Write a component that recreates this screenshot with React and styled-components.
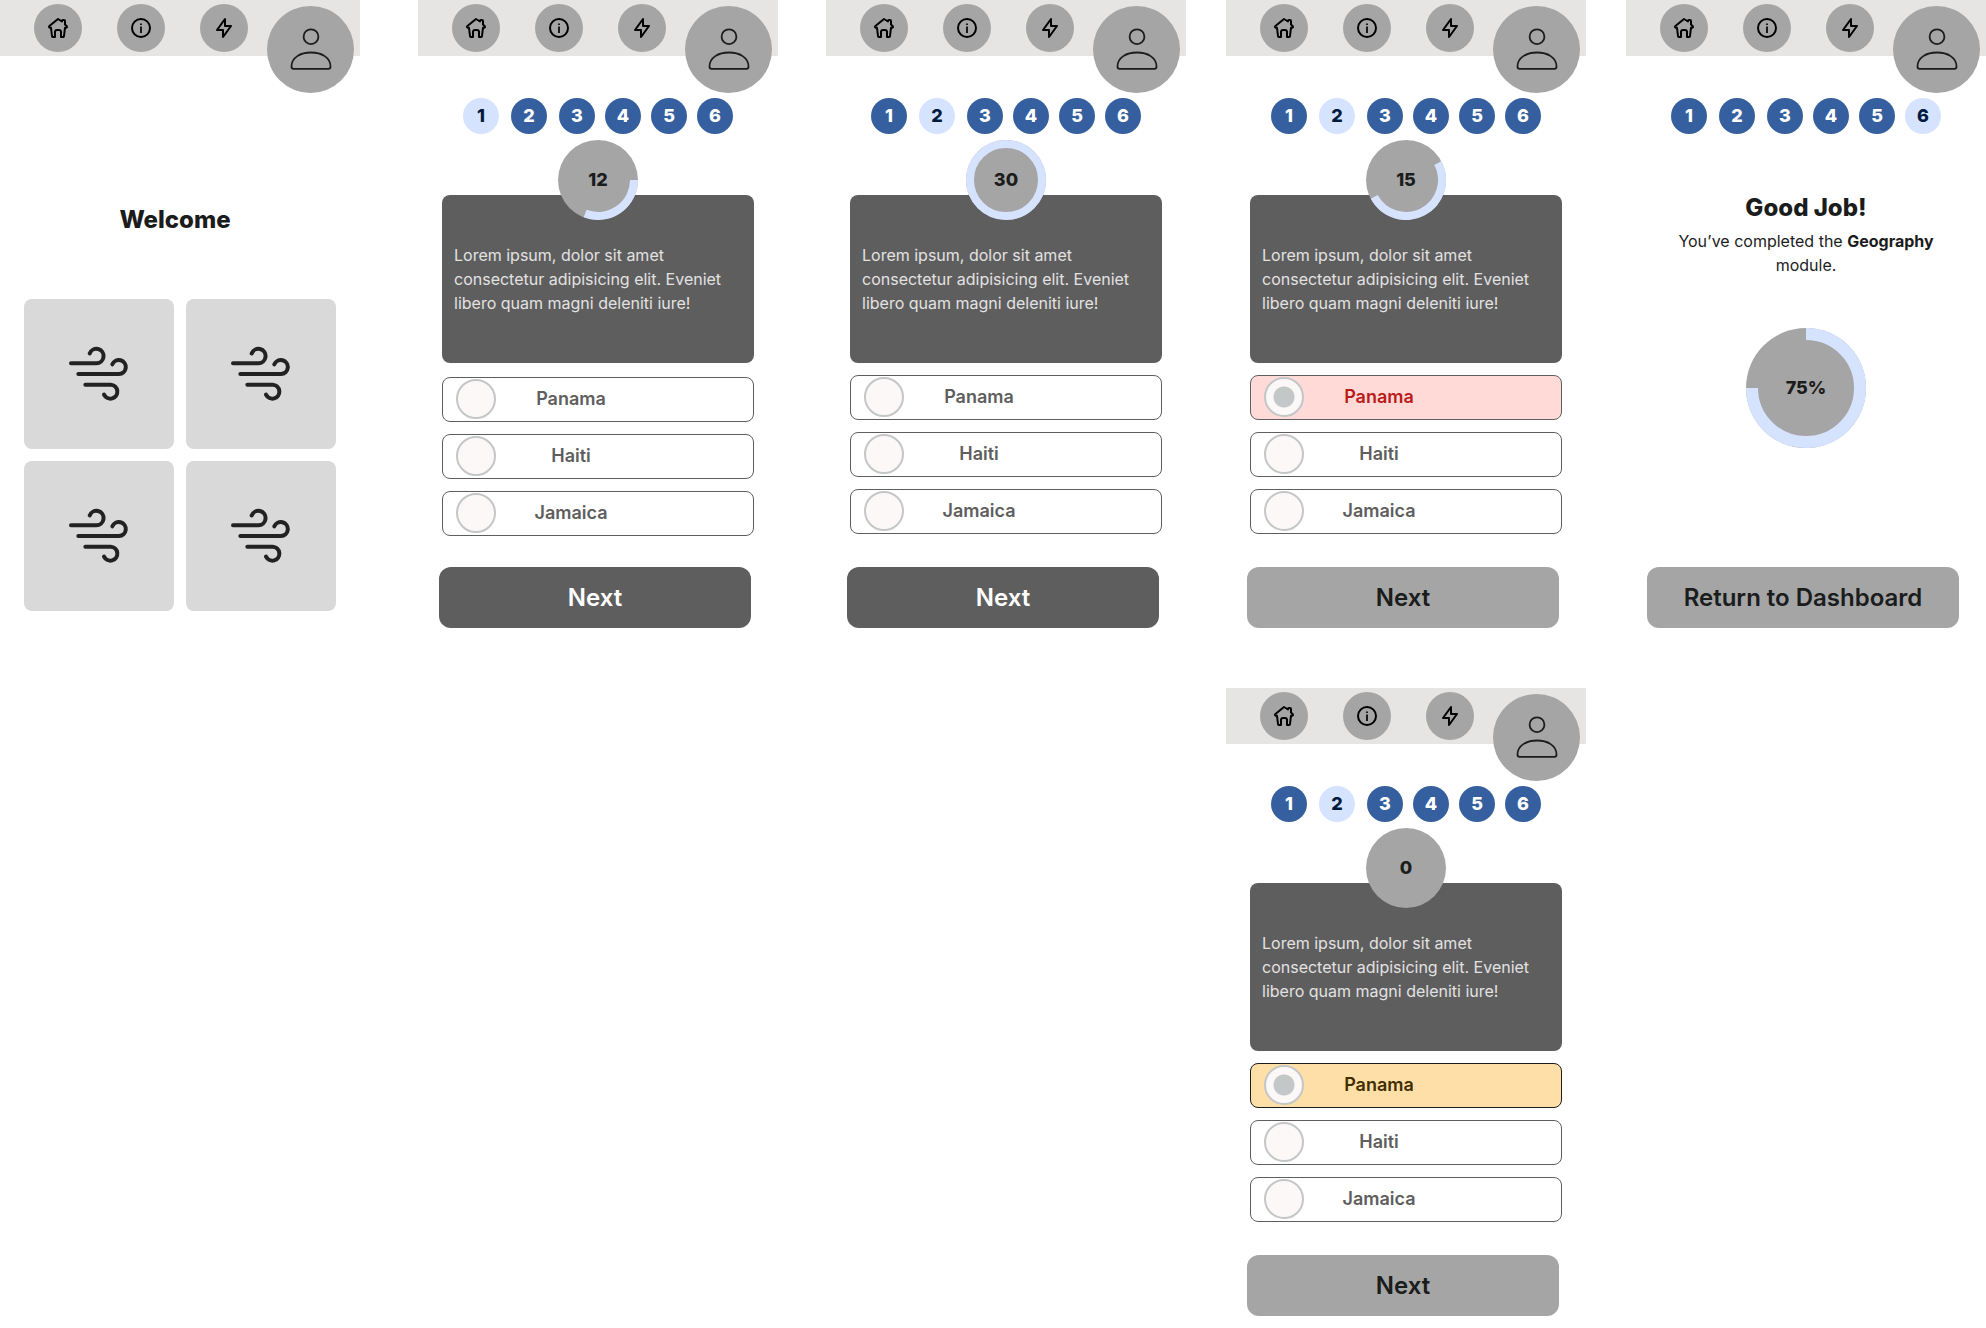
import React, { useId, useState } from "react";
import styled, { createGlobalStyle, css } from "styled-components";

const color = {
  ink: "#1b1c1c",
  slate: "#5e5e5e",
  grey: "#a5a5a5",
  bar: "#e6e5e4",
  tile: "#d9d9d9",
  blue: "#355f9e",
  sky: "#d6e3ff",
  navy: "#001b3e",
  radioLine: "#c3c7c7",
  radioFill: "#fcf8f8",
};

const GlobalStyle = createGlobalStyle`
  *, *::before, *::after { box-sizing: border-box; }
  body {
    margin: 0;
    background: #fff;
    color: ${color.ink};
    font-family: Inter, "Liberation Sans", sans-serif;
  }
  button, input { font: inherit; }
`;

/* ---------- board ---------- */

const Board = styled.main`
  display: flex;
  align-items: flex-start;
`;

const Lane = styled.div`
  flex: 1 1 0;
  min-width: 0;
  display: flex;
  flex-direction: column;
  gap: 48px;
  margin-right: ${(p) => p.$after || 0}px;
`;

const Screen = styled.section`
  display: flex;
  flex-direction: column;
  min-height: 640px;
  padding-bottom: 12px;
`;

/* ---------- header ---------- */

const TopBar = styled.header`
  display: flex;
  align-items: flex-start;
  justify-content: space-between;
  height: 56px;
  padding: 4px 6px 0 34px;
  background: ${color.bar};
`;

const BarNav = styled.nav`
  display: flex;
  gap: 35px;
`;

const round = css`
  display: flex;
  align-items: center;
  justify-content: center;
  flex: none;
  padding: 0;
  border: 0;
  border-radius: 50%;
  cursor: pointer;
`;

const BarButton = styled.button`
  ${round}
  width: 48px;
  height: 48px;
  background: ${color.grey};
  color: #000;
`;

const Avatar = styled.button`
  ${round}
  width: 87px;
  height: 87px;
  margin-top: 2px;
  background: ${color.grey};
  color: ${color.ink};
`;

/* ---------- steps ---------- */

const StepList = styled.ol`
  display: flex;
  justify-content: center;
  margin: 42px 0 0;
  padding: 0;
  list-style: none;
`;

const StepItem = styled.li`
  &:not(:last-child) { margin-right: 10px; }
  &:nth-child(-n + 2) { margin-right: 12px; }
`;

const Step = styled.button`
  ${round}
  width: 36px;
  height: 36px;
  font-size: 18px;
  font-weight: 800;
  line-height: 24px;
  background: ${(p) => (p.$current ? color.sky : color.blue)};
  color: ${(p) => (p.$current ? color.navy : "#fff")};
`;

/* ---------- dial ---------- */

const DialBox = styled.div`
  display: grid;
  place-items: center;
  align-self: center;
  width: ${(p) => p.$size}px;
  height: ${(p) => p.$size}px;
  > * { grid-area: 1 / 1; }
`;

const DialValue = styled.span`
  font-size: 18px;
  font-weight: 800;
  line-height: 24px;
`;

const TimerSlot = styled.div`
  display: flex;
  justify-content: center;
  margin: 6px 0 -25px;
  position: relative;
  z-index: 1;
`;

/* ---------- question ---------- */

const Body = styled.div`
  display: flex;
  flex-direction: column;
  padding: 0 24px;
`;

const Card = styled.div`
  display: flex;
  align-items: center;
  min-height: 168px;
  padding: 0 12px;
  border-radius: 8px;
  background: ${color.slate};
  color: #e3e2e2;
`;

const CardText = styled.p`
  margin: 0;
  font-size: 16px;
  line-height: 24px;
`;

const Options = styled.fieldset`
  display: flex;
  flex-direction: column;
  gap: 12px;
  min-width: 0;
  margin: ${(p) => (p.$loose ? 14 : 12)}px 0 0;
  padding: 0;
  border: 0;
`;

const tones = {
  plain: { background: "#fff", text: color.slate, line: color.slate },
  wrong: { background: "#ffdad6", text: "#ba1a1a", line: color.slate },
  late: { background: "#ffdfa8", text: "#402d00", line: color.ink },
};

const Option = styled.label`
  display: flex;
  align-items: center;
  height: 45px;
  padding: 0 0 1px 13px;
  border: 1px solid ${(p) => tones[p.$tone].line};
  border-radius: 8px;
  background: ${(p) => tones[p.$tone].background};
  color: ${(p) => tones[p.$tone].text};
  cursor: pointer;
`;

const Radio = styled.input`
  appearance: none;
  flex: none;
  width: 40px;
  height: 40px;
  margin: 0;
  border: 2px solid ${color.radioLine};
  border-radius: 50%;
  background: ${color.radioFill};
  &:checked {
    background: radial-gradient(circle, ${color.radioLine} 10px, ${color.radioFill} 11px);
  }
`;

const OptionText = styled.span`
  width: 150px;
  text-align: center;
  font-size: 18px;
  font-weight: 600;
  line-height: 24px;
`;

/* ---------- footer ---------- */

const Action = styled.button`
  height: 61px;
  margin: auto 27px 0 21px;
  padding: 0;
  border: 0;
  border-radius: 12px;
  background: ${(p) => (p.$strong ? color.slate : color.grey)};
  color: ${(p) => (p.$strong ? "#fff" : color.ink)};
  font-size: 24px;
  font-weight: 600;
  line-height: 32px;
  cursor: pointer;
`;

/* ---------- welcome and result ---------- */

const Title = styled.h1`
  margin: 0;
  text-align: center;
  font-size: 24px;
  font-weight: 800;
  line-height: 32px;
`;

const Welcome = styled.div`
  padding: 148px 34px 63px 24px;
`;

const Tiles = styled.div`
  display: grid;
  grid-template-columns: repeat(2, minmax(0, 1fr));
  gap: 12px;
  padding: 0 24px;
`;

const Tile = styled.button`
  display: flex;
  align-items: center;
  justify-content: center;
  aspect-ratio: 1;
  padding: 0;
  border: 0;
  border-radius: 8px;
  background: ${color.tile};
  color: #222;
  cursor: pointer;
`;

const Result = styled.div`
  display: flex;
  flex-direction: column;
  padding: 58px 48px 0;
`;

const Message = styled.p`
  margin: 5px 0 51px;
  text-align: center;
  font-size: 16px;
  line-height: 24px;
`;

/* ---------- drawings ---------- */

const HomeIcon = () => (
  <svg width="24" height="24" viewBox="0 0 24 24" fill="none" stroke="currentColor" strokeWidth="2" strokeLinecap="round" strokeLinejoin="round" aria-hidden="true">
    <path d="M12 3 3.4 10c-.8.7-.3 1.8.6 1.8h1L6 20c.1.6.4 1 1 1h2v-5c0-1.300 1-2 2-2h2c1 0 2 .7 2 2v5h2c.6 0 .9-.4 1-1l1-8.200h1c.9 0 1.300-1.100.6-1.800L19 8.500V5c0-.6-.4-1-1-1h-1c-.6 0-1 .4-1 1v.5L12 3Z" />
  </svg>
);

const InfoIcon = () => (
  <svg width="24" height="24" viewBox="0 0 24 24" fill="none" stroke="currentColor" aria-hidden="true">
    <circle cx="12" cy="12" r="9" strokeWidth="2" />
    <path d="M12 10.500V17M12 7.500V9" strokeWidth="1.700" />
  </svg>
);

const BoltIcon = () => (
  <svg width="24" height="24" viewBox="0 0 24 24" fill="none" stroke="currentColor" strokeWidth="2" strokeLinecap="round" strokeLinejoin="round" aria-hidden="true">
    <path d="M13 3v7h6l-8 11v-7H5l8-11Z" />
  </svg>
);

const PersonIcon = () => (
  <svg width="44" height="44" viewBox="-22 -22 44 44" fill="none" stroke="currentColor" strokeWidth="1.800" strokeLinejoin="round" aria-hidden="true">
    <circle cx="0" cy="-13.300" r="7.400" />
    <path d="M-19.500 16.500C-19.500 7.500-10.500 2.500 0 2.500S19.500 7.500 19.500 16.500c0 1.800-.6 2.300-2 2.300h-35c-1.400 0-2-.5-2-2.300Z" />
  </svg>
);

const WindIcon = () => (
  <svg width="60" height="56" viewBox="207 198 180 168" fill="none" stroke="currentColor" strokeWidth="12" strokeLinecap="round" aria-hidden="true">
    <path d="M213 249.500h76a21.500 21.500 0 1 0-20-29" />
    <path d="M235 282h122a21 21 0 1 0-20-29" />
    <path d="M256 314h76a21 21 0 1 1-20 30" />
  </svg>
);

function polar(r, degrees) {
  const a = (degrees * Math.PI) / 180;
  return `${r * Math.sin(a)} ${-r * Math.cos(a)}`;
}

function Dial({ size, from, to, children }) {
  const half = size / 2;
  const band = size / 10;
  const r = half - band / 2;
  const sweep = to - from;
  return (
    <DialBox $size={size}>
      <svg width={size} height={size} viewBox={`${-half} ${-half} ${size} ${size}`} fill="none" aria-hidden="true">
        <circle r={half} fill={color.grey} />
        {sweep >= 360 && <circle r={r} stroke={color.sky} strokeWidth={band} />}
        {sweep > 0 && sweep < 360 && (
          <path
            d={`M${polar(r, from)}A${r} ${r} 0 ${sweep > 180 ? 1 : 0} 1 ${polar(r, to)}`}
            stroke={color.sky}
            strokeWidth={band}
          />
        )}
      </svg>
      <DialValue>{children}</DialValue>
    </DialBox>
  );
}

/* ---------- parts ---------- */

function Header() {
  return (
    <TopBar>
      <BarNav aria-label="Main">
        <BarButton type="button" aria-label="Home"><HomeIcon /></BarButton>
        <BarButton type="button" aria-label="Information"><InfoIcon /></BarButton>
        <BarButton type="button" aria-label="Activity"><BoltIcon /></BarButton>
      </BarNav>
      <Avatar type="button" aria-label="Profile"><PersonIcon /></Avatar>
    </TopBar>
  );
}

function Steps({ current }) {
  return (
    <StepList>
      {[1, 2, 3, 4, 5, 6].map((n) => (
        <StepItem key={n}>
          <Step type="button" $current={n === current} aria-current={n === current ? "step" : undefined}>
            {n}
          </Step>
        </StepItem>
      ))}
    </StepList>
  );
}

function Question({ step, seconds, from, to, answer = null, tone = "plain", loose, strong }) {
  const group = useId();
  const [picked, setPicked] = useState(answer);
  return (
    <Screen>
      <Header />
      <Steps current={step} />
      <TimerSlot>
        <Dial size={80} from={from} to={to}>{seconds}</Dial>
      </TimerSlot>
      <Body>
        <Card>
          <CardText>
            Lorem ipsum, dolor sit amet consectetur adipisicing elit. Eveniet libero quam magni deleniti iure!
          </CardText>
        </Card>
        <Options $loose={loose} aria-label="Answers">
          {["Panama", "Haiti", "Jamaica"].map((name) => (
            <Option key={name} $tone={picked === name ? tone : "plain"}>
              <Radio type="radio" name={group} checked={picked === name} onChange={() => setPicked(name)} />
              <OptionText>{name}</OptionText>
            </Option>
          ))}
        </Options>
      </Body>
      <Action type="button" $strong={strong}>Next</Action>
    </Screen>
  );
}

export default function App() {
  return (
    <>
      <GlobalStyle />
      <Board>
        <Lane $after={58}>
          <Screen>
            <Header />
            <Welcome>
              <Title>Welcome</Title>
            </Welcome>
            <Tiles>
              {["one", "two", "three", "four"].map((id) => (
                <Tile key={id} type="button" aria-label={`Module ${id}`}><WindIcon /></Tile>
              ))}
            </Tiles>
          </Screen>
        </Lane>
        <Lane $after={48}>
          <Question step={1} seconds={12} from={90} to={201} loose strong />
        </Lane>
        <Lane $after={40}>
          <Question step={2} seconds={30} from={0} to={360} strong />
        </Lane>
        <Lane $after={40}>
          <Question step={2} seconds={15} from={62} to={242} answer="Panama" tone="wrong" />
          <Question step={2} seconds={0} from={0} to={0} answer="Panama" tone="late" />
        </Lane>
        <Lane>
          <Screen>
            <Header />
            <Steps current={6} />
            <Result>
              <Title>Good Job!</Title>
              <Message>You’ve completed the <strong>Geography</strong> module.</Message>
              <Dial size={120} from={0} to={270}>75%</Dial>
            </Result>
            <Action type="button">Return to Dashboard</Action>
          </Screen>
        </Lane>
      </Board>
    </>
  );
}
